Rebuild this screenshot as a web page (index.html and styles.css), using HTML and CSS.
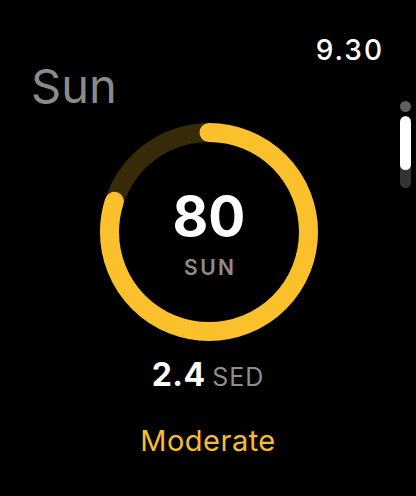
FILE: index.html
```html
<!DOCTYPE html>
<html>
<head>
<meta charset="utf-8">
<link rel="stylesheet" href="styles.css">
</head>
<body>
<div class="screen">
  <div class="status"><span class="time">9.30</span></div>
  <h1 class="title">Sun</h1>
  <div class="ring">
    <svg class="ring-svg" width="218" height="218" viewBox="0 0 218 218">
      <circle class="track" cx="109" cy="109" r="99.5"/>
      <circle class="progress" cx="109" cy="109" r="99.5" pathLength="100" stroke-dasharray="80 100" transform="rotate(-90 109 109)"/>
    </svg>
    <div class="ring-label">
      <div class="value">80</div>
      <div class="unit">SUN</div>
    </div>
  </div>
  <div class="reading"><span class="reading-num">2.4</span> <span class="reading-unit">SED</span></div>
  <div class="level">Moderate</div>
  <div class="scroll">
    <div class="scroll-dot"></div>
    <div class="scroll-track"><div class="scroll-thumb"></div></div>
  </div>
</div>
</body>
</html>
```

FILE: styles.css
```css
html, body {
  margin: 0;
  padding: 0;
  background: #000;
}
body {
  font-family: Inter, "Noto Sans", sans-serif;
  color: #fff;
}
.screen {
  position: relative;
  width: 416px;
  height: 496px;
  box-sizing: border-box;
  padding-top: 36px;
  overflow: hidden;
}
.status {
  display: flex;
  justify-content: flex-end;
  padding-right: 32px;
}
.time {
  font-size: 28px;
  line-height: 28px;
  font-weight: 500;
  letter-spacing: 2px;
  color: #fff;
}
.title {
  margin: -2px 0 0 0;
  padding-left: 31px;
  font-size: 47px;
  line-height: 47px;
  font-weight: 400;
  color: #8a8a8a;
}
.ring {
  display: grid;
  width: 218px;
  height: 218px;
  margin: 14px 0 0 100px;
}
.ring-svg, .ring-label {
  grid-area: 1 / 1;
}
.track {
  fill: none;
  stroke: #362a08;
  stroke-width: 19;
}
.progress {
  fill: none;
  stroke: #fbc12d;
  stroke-width: 19;
  stroke-linecap: round;
}
.ring-label {
  display: flex;
  flex-direction: column;
  align-items: center;
  padding-top: 66px;
}
.value {
  font-size: 55px;
  line-height: 55px;
  font-weight: 700;
  color: #fff;
}
.unit {
  margin-top: 13px;
  padding-left: 2.5px;
  font-size: 21px;
  line-height: 21px;
  font-weight: 600;
  letter-spacing: 2.5px;
  color: #8e8e8e;
}
.reading {
  margin-top: 18px;
  text-align: center;
  line-height: 32px;
  word-spacing: 2px;
}
.reading-num {
  font-size: 32px;
  font-weight: 700;
  letter-spacing: 0.5px;
  color: #fff;
}
.reading-unit {
  font-size: 25px;
  font-weight: 400;
  letter-spacing: 1px;
  color: #8e8e8e;
}
.level {
  margin-top: 30px;
  text-align: center;
  font-size: 29px;
  line-height: 29px;
  font-weight: 400;
  letter-spacing: 0.5px;
  color: #f6be2d;
}
.scroll {
  position: absolute;
  left: 400px;
  top: 101px;
  width: 11px;
  display: flex;
  flex-direction: column;
  gap: 4px;
}
.scroll-dot {
  width: 11px;
  height: 11px;
  border-radius: 50%;
  background: #5f5f5f;
}
.scroll-track {
  width: 11px;
  height: 72px;
  border-radius: 6px;
  background: #333;
  overflow: hidden;
}
.scroll-thumb {
  width: 11px;
  height: 54px;
  border-radius: 6px;
  background: #fff;
}
```
